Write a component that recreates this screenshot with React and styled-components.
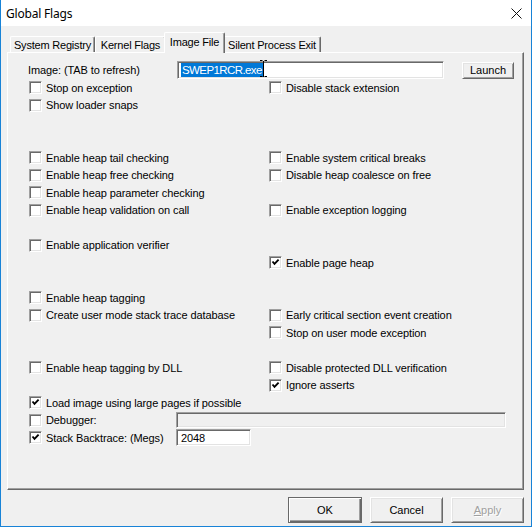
import React from "react";
import styled, { createGlobalStyle } from "styled-components";

const GlobalStyle = createGlobalStyle`
  html, body {
    margin: 0;
    padding: 0;
    background: #ffffff;
  }
  * {
    box-sizing: border-box;
  }
`;

const Window = styled.div`
  width: 532px;
  height: 527px;
  display: flex;
  flex-direction: column;
  border: 1px solid #1883d7;
  border-top: none;
  font-family: "Liberation Sans", Arial, sans-serif;
  font-size: 11px;
  color: #000;
`;

const TitleBar = styled.div`
  height: 26px;
  flex: none;
  display: flex;
  align-items: center;
  justify-content: space-between;
  padding: 0 9px 0 5px;
  background: #ffffff;
`;

const Title = styled.span`
  font-family: "Noto Sans", "Liberation Sans", sans-serif;
  font-size: 12px;
  letter-spacing: -0.2px;
`;

const CloseIcon = () => (
  <svg width="11" height="11" viewBox="0 0 11 11">
    <path d="M0.5 0.5 L10.5 10.5 M10.5 0.5 L0.5 10.5" stroke="#111" strokeWidth="1" />
  </svg>
);

const Body = styled.div`
  flex: 1;
  display: flex;
  flex-direction: column;
  background: #f0f0f0;
  padding: 7px 7px 2px 6px;
`;

const TabStrip = styled.div`
  height: 19px;
  flex: none;
  display: flex;
  align-items: flex-end;
  padding-left: 3px;
`;

const Tab = styled.div`
  width: ${(p) => p.$w}px;
  height: ${(p) => (p.$active ? 21 : 16)}px;
  margin: ${(p) => (p.$active ? "0 -2px -1px -2px" : "0")};
  padding-bottom: ${(p) => (p.$active ? 3 : 0)}px;
  position: relative;
  z-index: ${(p) => (p.$active ? 2 : 0)};
  display: flex;
  align-items: center;
  justify-content: center;
  background: #f0f0f0;
  border-top: 1px solid #ffffff;
  border-left: 1px solid #ffffff;
  border-right: 1px solid #696969;
  box-shadow: inset -1px 0 #a0a0a0;
  border-radius: 2px 2px 0 0;
  letter-spacing: -0.2px;
  white-space: nowrap;
`;

const Panel = styled.div`
  height: 438px;
  flex: none;
  border-top: 1px solid #ffffff;
  border-left: 1px solid #ffffff;
  border-right: 1px solid #696969;
  border-bottom: 1px solid #696969;
  box-shadow: inset -1px -1px #a0a0a0;
  padding: 8.5px 0 0 20px;
  display: grid;
  grid-template-columns: 240px 1fr;
  grid-template-rows: repeat(22, 17.5px);
`;

const Cell = styled.div`
  grid-row: ${(p) => p.$row + 1};
  grid-column: ${(p) => (p.$span ? "1 / -1" : p.$col + 1)};
  display: flex;
  align-items: center;
  white-space: nowrap;
  letter-spacing: -0.1px;
`;

const LabelSlot = styled.div`
  width: ${(p) => p.$w}px;
  flex: none;
  display: flex;
  align-items: center;
`;

const Box = styled.span`
  width: 13px;
  height: 13px;
  flex: none;
  margin: 0 4px 0 1px;
  display: flex;
  align-items: center;
  justify-content: center;
  background: #ffffff;
  border: 1px solid;
  border-color: #a0a0a0 #ffffff #ffffff #a0a0a0;
  box-shadow: inset 1px 1px #696969, inset -1px -1px #e3e3e3;
`;

const CheckMark = () => (
  <svg width="9" height="9" viewBox="0 0 9 9">
    <path d="M1.5 3.5 L3.5 5.8 L7.6 1.6" fill="none" stroke="#000" strokeWidth="1.9" />
  </svg>
);

const TextField = styled.div`
  position: relative;
  width: ${(p) => p.$w}px;
  height: ${(p) => p.$h}px;
  flex: none;
  display: flex;
  align-items: center;
  padding-left: 4px;
  background: ${(p) => (p.$disabled ? "#f0f0f0" : "#ffffff")};
  border: 1px solid;
  border-color: #a0a0a0 #ffffff #ffffff #a0a0a0;
  box-shadow: inset 1px 1px #696969, inset -1px -1px #e3e3e3;
`;

const Selection = styled.span`
  background: #0078d7;
  color: #ffffff;
  font-size: 11.5px;
  line-height: 14px;
  letter-spacing: -0.6px;
  padding: 0 1px 0 1px;
  margin-left: -1px;
`;

const Caret = styled.span`
  width: 1px;
  height: 13px;
  background: #000;
`;

const IBeam = styled.svg`
  position: absolute;
  left: 82px;
  top: -2px;
`;

const Button = styled.button`
  width: ${(p) => p.$w}px;
  height: ${(p) => p.$h}px;
  flex: none;
  margin-left: ${(p) => p.$ml || 0}px;
  padding: 0;
  font-family: "Liberation Sans", Arial, sans-serif;
  font-size: 11px;
  color: ${(p) => (p.$disabled ? "#a0a0a0" : "#000")};
  text-shadow: ${(p) => (p.$disabled ? "1px 1px #ffffff" : "none")};
  background: #f0f0f0;
  border: 1px solid;
  border-color: ${(p) =>
    p.$default ? "#696969" : "#ffffff #696969 #696969 #ffffff"};
  box-shadow: ${(p) =>
    p.$default
      ? "inset 1px 1px #ffffff, inset -1px -1px #696969, inset -2px -2px #a0a0a0"
      : "inset 1px 1px #e3e3e3, inset -1px -1px #a0a0a0"};
`;

const ButtonRow = styled.div`
  flex: none;
  margin-top: 7px;
  display: flex;
  justify-content: flex-end;
  gap: 8px;
`;

const Check = ({ label, checked }) => (
  <>
    <Box>{checked && <CheckMark />}</Box>
    <span>{label}</span>
  </>
);

const flags = [
  [1, 0, "Stop on exception"],
  [2, 0, "Show loader snaps"],
  [5, 0, "Enable heap tail checking"],
  [6, 0, "Enable heap free checking"],
  [7, 0, "Enable heap parameter checking"],
  [8, 0, "Enable heap validation on call"],
  [10, 0, "Enable application verifier"],
  [13, 0, "Enable heap tagging"],
  [14, 0, "Create user mode stack trace database"],
  [17, 0, "Enable heap tagging by DLL"],
  [1, 1, "Disable stack extension"],
  [5, 1, "Enable system critical breaks"],
  [6, 1, "Disable heap coalesce on free"],
  [8, 1, "Enable exception logging"],
  [11, 1, "Enable page heap", true],
  [14, 1, "Early critical section event creation"],
  [15, 1, "Stop on user mode exception"],
  [17, 1, "Disable protected DLL verification"],
  [18, 1, "Ignore asserts", true],
];

const tabs = [
  ["System Registry", 85],
  ["Kernel Flags", 71],
  ["Image File", 61, true],
  ["Silent Process Exit", 98],
];

export default function App() {
  return (
    <>
      <GlobalStyle />
      <Window>
        <TitleBar>
          <Title>Global Flags</Title>
          <CloseIcon />
        </TitleBar>
        <Body>
          <TabStrip>
            {tabs.map(([name, w, active]) => (
              <Tab key={name} $w={w} $active={active}>
                {name}
              </Tab>
            ))}
          </TabStrip>
          <Panel>
            <Cell $row={0} $span>
              <LabelSlot $w={149}>Image: (TAB to refresh)</LabelSlot>
              <TextField $w={267} $h={18}>
                <Selection>SWEP1RCR.exe</Selection>
                <Caret />
                <IBeam width="7" height="17" viewBox="0 0 7 17">
                  <path
                    d="M0 0.5H2.5M4.5 0.5H7M3.5 1V16M0 16.5H2.5M4.5 16.5H7"
                    stroke="#000"
                    strokeWidth="1"
                    fill="none"
                  />
                </IBeam>
              </TextField>
              <Button $w={52} $h={17} $ml={18}>
                Launch
              </Button>
            </Cell>
            {flags.map(([row, col, label, checked]) => (
              <Cell key={label} $row={row} $col={col}>
                <Check label={label} checked={checked} />
              </Cell>
            ))}
            <Cell $row={19} $span>
              <Check label="Load image using large pages if possible" checked />
            </Cell>
            <Cell $row={20} $span>
              <LabelSlot $w={148}>
                <Check label="Debugger:" />
              </LabelSlot>
              <TextField $w={330} $h={16} $disabled />
            </Cell>
            <Cell $row={21} $span>
              <LabelSlot $w={148}>
                <Check label="Stack Backtrace: (Megs)" checked />
              </LabelSlot>
              <TextField $w={75} $h={17}>2048</TextField>
            </Cell>
          </Panel>
          <ButtonRow>
            <Button $w={74} $h={26} $default>
              OK
            </Button>
            <Button $w={73} $h={26}>
              Cancel
            </Button>
            <Button $w={73} $h={26} $disabled>
              <u>A</u>pply
            </Button>
          </ButtonRow>
        </Body>
      </Window>
    </>
  );
}
